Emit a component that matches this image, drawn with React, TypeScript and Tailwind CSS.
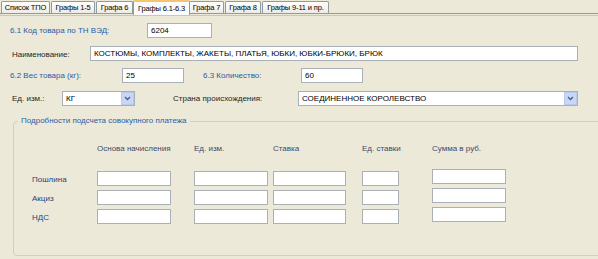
import React from "react";

const tabs = [
  { label: "Список ТПО", w: "w-[49px]" },
  { label: "Графы 1-5", w: "w-[44px]" },
  { label: "Графа 6", w: "w-[37px]" },
  { label: "Графы 6.1-6.3", w: "w-[57px]", active: true },
  { label: "Графа 7", w: "w-[35px]" },
  { label: "Графа 8", w: "w-[36px]" },
  { label: "Графы 9-11 и пр.", w: "w-[67px]" },
];

function Box({ w, value, className = "" }: { w: string; value?: string; className?: string }) {
  return (
    <div
      className={`${w} h-[15px] shrink-0 border border-[#a9b0b8] bg-white pl-[3px] text-[8px] leading-[13px] text-black whitespace-nowrap overflow-hidden ${className}`}
    >
      {value}
    </div>
  );
}

function Select({ w, value }: { w: string; value: string }) {
  return (
    <div className={`${w} h-[15px] shrink-0 border border-[#a9b0b8] bg-white flex items-center`}>
      <div className="flex-1 pl-[3px] text-[8px] leading-[13px] text-black whitespace-nowrap overflow-hidden">{value}</div>
      <div className="w-[13px] h-[13px] bg-[#c8d7f6] border border-[#b9c9ee] flex items-center justify-center">
        <svg width="7" height="5" viewBox="0 0 7 5">
          <path d="M1 1 L3.5 3.5 L6 1" stroke="#4a5d8a" strokeWidth="1.4" fill="none" />
        </svg>
      </div>
    </div>
  );
}

const blue = "text-[#2b5ba8]";
const dark = "text-[#1f1f1f]";

export default function App() {
  const rows = ["Пошлина", "Акциз", "НДС"];
  return (
    <div className="w-[598px] h-[259px] bg-[#ECE9D8] overflow-hidden font-['Liberation_Sans',sans-serif] text-[8px]">
      {/* tab strip */}
      <div className="relative h-[15px] flex items-end pl-[1px] text-[7.5px] tracking-[-0.15px]">
        {tabs.map((t) =>
          t.active ? (
            <div
              key={t.label}
              className={`${t.w} h-[15px] -ml-[1px] -mr-[1px] z-10 bg-[#fcfcfe] border border-b-0 border-[#919b9c] border-t-[2px] border-t-[#f3c56f] rounded-t-[2px] flex items-center justify-center text-black leading-none whitespace-nowrap`}
            >
              {t.label}
            </div>
          ) : (
            <div
              key={t.label}
              className={`${t.w} h-[12px] mr-[1px] mb-[2px] bg-gradient-to-b from-[#ffffff] to-[#ecebe6] border border-b-0 border-[#919b9c] rounded-t-[2px] flex items-center justify-center text-black leading-none whitespace-nowrap`}
            >
              {t.label}
            </div>
          )
        )}
        <div className="flex-1" />
        <div className="absolute left-0 right-0 bottom-[1px] h-[1px] bg-[#919b9c]" />
        <div className="absolute left-0 right-0 bottom-[-1px] h-[1px] bg-[#c9c7b8]" />
      </div>

      <div className="pl-[10px]">
        {/* row 1 */}
        <div className="mt-[8px] flex items-center">
          <div className={`w-[137px] ${blue}`}>6.1 Код товара по ТН ВЭД:</div>
          <Box w="w-[65px]" value="6204" />
        </div>
        {/* row 2 */}
        <div className="mt-[7px] flex items-center pl-[2px]">
          <div className={`w-[78px] ${dark} pt-[4px]`}>Наименование:</div>
          <Box w="w-[488px]" value="КОСТЮМЫ, КОМПЛЕКТЫ, ЖАКЕТЫ, ПЛАТЬЯ, ЮБКИ, ЮБКИ-БРЮКИ, БРЮК" />
        </div>
        {/* row 3 */}
        <div className="mt-[7px] flex items-center">
          <div className={`w-[112px] ${blue}`}>6.2 Вес товара (кг):</div>
          <Box w="w-[62px]" value="25" />
          <div className={`ml-[19px] w-[98px] ${blue}`}>6.3 Количество:</div>
          <Box w="w-[62px]" value="60" />
        </div>
        {/* row 4 */}
        <div className="mt-[8px] flex items-center pl-[2px]">
          <div className={`w-[50px] ${dark}`}>Ед. изм.:</div>
          <Select w="w-[73px]" value="КГ" />
          <div className={`ml-[38px] w-[125px] ${dark}`}>Страна происхождения:</div>
          <Select w="w-[280px]" value="СОЕДИНЕННОЕ КОРОЛЕВСТВО" />
        </div>
      </div>

      <fieldset className="mt-[10px] ml-[13px] w-[620px] h-[140px] border border-[#d0d0bf] rounded-[4px] pl-[18px]">
        <legend className={`-ml-[14px] px-[3px] ${blue} leading-[10px]`}>Подробности подсчета совокупного платежа</legend>
        <div className="grid grid-cols-[65px_97px_79px_89px_70px_74px] text-[#3b4a6a] mt-[18px] leading-[10px]">
          <div />
          <div>Основа начисления</div>
          <div>Ед. изм.</div>
          <div>Ставка</div>
          <div>Ед. ставки</div>
          <div>Сумма в руб.</div>
        </div>
        <div className="mt-[17px] flex flex-col gap-[4px]">
          {rows.map((r) => (
            <div key={r} className="grid grid-cols-[65px_97px_79px_89px_70px_74px] items-center">
              <div className="text-[#1e3f80] pt-[2px]">{r}</div>
              <Box w="w-[74px]" />
              <Box w="w-[74px]" />
              <Box w="w-[73px]" />
              <Box w="w-[37px]" className="-mt-[1px]" />
              <Box w="w-[74px]" className="-mt-[4px]" />
            </div>
          ))}
        </div>
      </fieldset>
    </div>
  );
}
